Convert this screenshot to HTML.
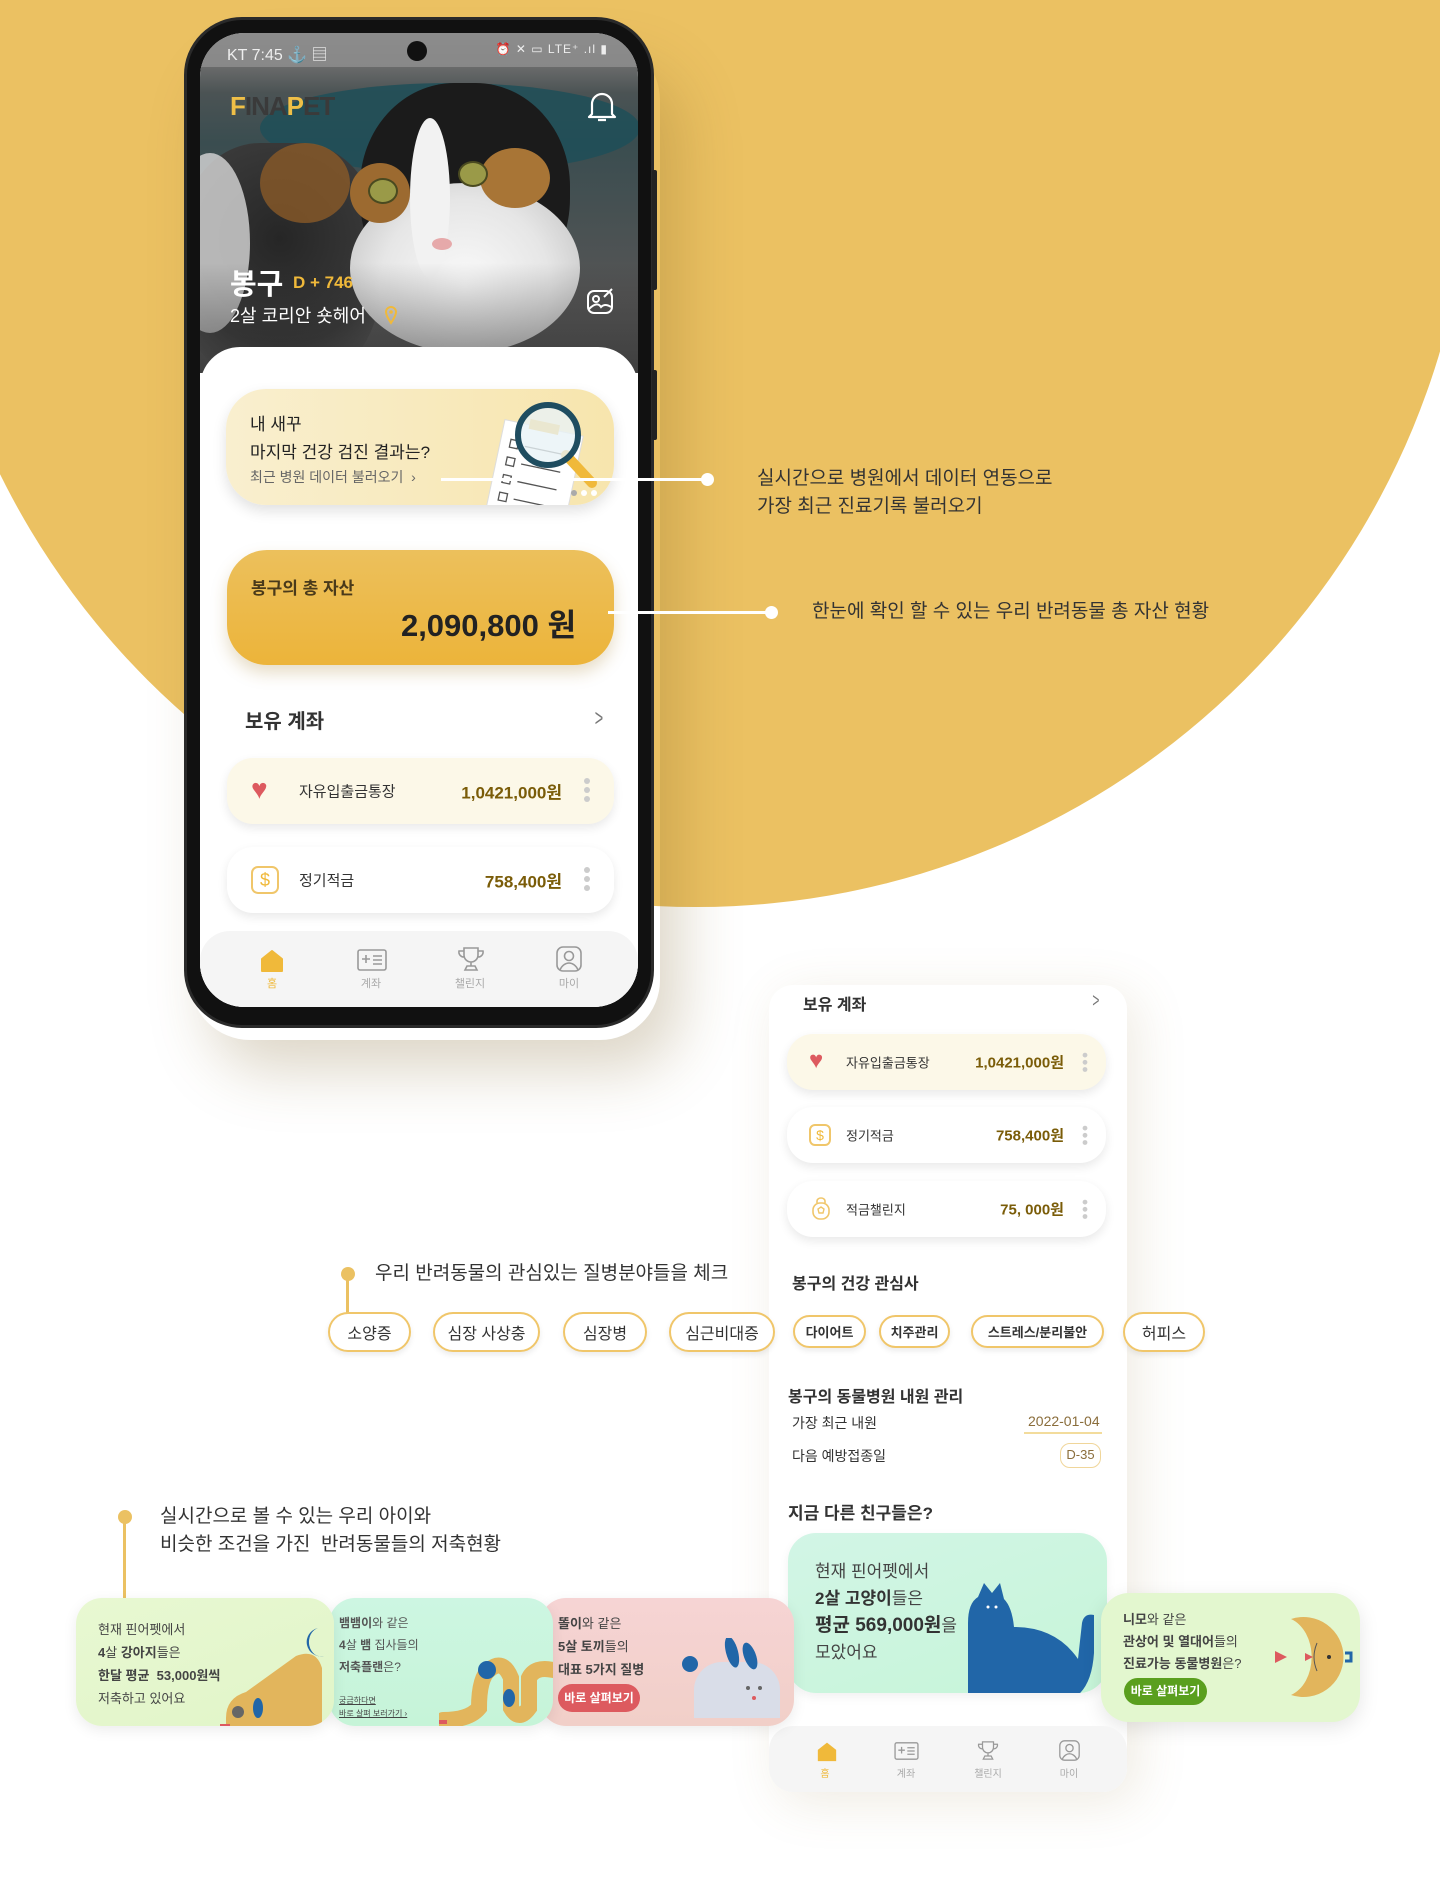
<!DOCTYPE html>
<html><head><meta charset="utf-8">
<style>
*{margin:0;padding:0;box-sizing:border-box}
body{width:1440px;height:1896px;position:relative;overflow:hidden;background:#fff;font-family:"Liberation Sans","Noto Sans CJK KR",sans-serif;color:#333}
.a{position:absolute}
.circle{position:absolute;left:-80px;top:-645px;width:1552px;height:1552px;border-radius:50%;background:#ebc162}
.ann{font-size:19px;color:#333;line-height:28px;white-space:nowrap}
.line{position:absolute;height:3px;background:#fff}
.wdot{position:absolute;width:13px;height:13px;border-radius:50%;background:#fff}
.ydot{position:absolute;width:14px;height:14px;border-radius:50%;background:#ebc162}
.row{position:absolute;border-radius:26px;background:#fff;box-shadow:0 4px 10px rgba(0,0,0,.09);font-size:15px;color:#333}
.row .n{position:absolute;top:50%;transform:translateY(-50%)}
.amt{color:#7a5c08;font-weight:bold}
.dots{position:absolute;width:6px}
.dots i{display:block;width:6px;height:6px;border-radius:50%;background:#ccc;margin-bottom:3px}
.chip{position:absolute;border:2px solid #f0c66a;border-radius:22px;background:#fff;display:flex;align-items:center;justify-content:center;font-size:16px;color:#333;box-shadow:0 3px 6px rgba(0,0,0,.08)}
.nav{position:absolute;background:#f5f5f5}
.nl{position:absolute;font-size:11px;color:#aaa;transform:translateX(-50%);text-align:center}
</style></head><body>
<div class="circle"></div>

<div class="a" style="left:190px;top:40px;width:470px;height:1000px;border-radius:60px;box-shadow:20px 30px 60px rgba(120,90,30,.25)"></div>
<div class="a" style="left:184px;top:17px;width:470px;height:1011px;border-radius:58px;background:#111;border:3px solid #2a2a2a"></div>
<div class="a" style="left:652px;top:170px;width:5px;height:120px;background:#222;border-radius:2px"></div>
<div class="a" style="left:652px;top:370px;width:5px;height:70px;background:#222;border-radius:2px"></div>
<div class="a" style="left:200px;top:33px;width:438px;height:974px;border-radius:44px;overflow:hidden;background:#fff">
  <div class="a" style="left:0;top:0;width:438px;height:340px;background:linear-gradient(180deg,#8c8c8c 0,#6e6e6e 30px,#4b5354 60px,#3a4d50 110px,#555 260px,#5a5a5a 340px)"></div>
  <div class="a" style="left:60px;top:50px;width:380px;height:90px;border-radius:50%;background:#1f4f58;opacity:.85"></div>
  <div class="a" style="left:-20px;top:110px;width:200px;height:240px;border-radius:40%;background:radial-gradient(circle at 50% 40%,#262626,#3a3a3a 60%,#555 80%)"></div>
  <div class="a" style="left:60px;top:110px;width:90px;height:80px;border-radius:50%;background:#8a5a28;opacity:.8"></div>
  <div class="a" style="left:-30px;top:120px;width:80px;height:180px;border-radius:50%;background:#d8d8d8;opacity:.8"></div>
  <div class="a" style="left:160px;top:50px;width:210px;height:230px;border-radius:45% 45% 50% 50%;background:#1b1b1b"></div>
  <div class="a" style="left:150px;top:150px;width:230px;height:170px;border-radius:50%;background:radial-gradient(circle at 50% 60%,#fafafa,#e6e6e6 55%,#cfcfcf 80%)"></div>
  <div class="a" style="left:210px;top:85px;width:40px;height:160px;border-radius:50%;background:#f2f2f2"></div>
  <div class="a" style="left:150px;top:130px;width:60px;height:60px;border-radius:50%;background:#9c6a30"></div>
  <div class="a" style="left:280px;top:115px;width:70px;height:60px;border-radius:50%;background:#a87536"></div>
  <div class="a" style="left:168px;top:145px;width:30px;height:26px;border-radius:50%;background:#9a9a48;border:2px solid #4a4a20"></div>
  <div class="a" style="left:258px;top:128px;width:30px;height:26px;border-radius:50%;background:#9a9a48;border:2px solid #4a4a20"></div>
  <div class="a" style="left:232px;top:205px;width:20px;height:12px;border-radius:50%;background:#e6a9aa"></div>
  <div class="a" style="left:0;top:230px;width:438px;height:110px;background:linear-gradient(180deg,rgba(40,40,40,0),rgba(40,40,40,.55))"></div>
  <div class="a" style="left:0;top:0;width:438px;height:34px;background:rgba(140,140,140,.9)"></div>
  <div class="a" style="left:27px;top:8px;font-size:16px;color:#eee">KT 7:45 ⚓ ▤</div>
  <div class="a" style="left:207px;top:8px;width:20px;height:20px;border-radius:50%;background:#111"></div>
  <div class="a" style="right:30px;top:9px;font-size:12px;color:#eee;letter-spacing:1px">⏰ ✕ ▭ LTE⁺ .ıl ▮</div>
  <div class="a" style="left:30px;top:58px;font-size:26px;font-weight:bold;letter-spacing:-1px;color:#3a3a3a"><span style="color:#efbf47">F</span>INA<span style="color:#efbf47">P</span>ET</div>
  <svg class="a" style="left:386px;top:56px" width="32" height="34" viewBox="0 0 32 34"><path d="M6 25 V15 a10 10 0 0 1 20 0 V25 L29 28 H3 Z M12 31 h8" fill="none" stroke="#fff" stroke-width="2.2" stroke-linejoin="round"/></svg>
  <div class="a" style="left:30px;top:228px;font-size:29px;font-weight:bold;color:#fff">봉구</div>
  <div class="a" style="left:93px;top:240px;font-size:17px;font-weight:bold;color:#f0b93a">D + 746</div>
  <div class="a" style="left:30px;top:269px;font-size:18px;color:#fff">2살 코리안 숏헤어</div>
  <svg class="a" style="left:184px;top:272px" width="14" height="20" viewBox="0 0 14 20"><path d="M7 18 C3 12 2 9 2 7 a5 5 0 0 1 10 0 c0 2 -1 5 -5 11z" fill="none" stroke="#f0b93a" stroke-width="2"/><circle cx="7" cy="7" r="1.8" fill="#f0b93a"/></svg>
  <svg class="a" style="left:386px;top:254px" width="30" height="30" viewBox="0 0 30 30"><rect x="2" y="4" width="24" height="22" rx="6" fill="none" stroke="#fff" stroke-width="2"/><circle cx="10" cy="12" r="3" fill="none" stroke="#fff" stroke-width="2"/><path d="M3 22 q8 -8 12 -2 q4 -4 10 0 M18 10 l8 -8" fill="none" stroke="#fff" stroke-width="2"/></svg>
  <div class="a" style="left:0;top:314px;width:438px;height:700px;background:#fff;border-radius:40px 40px 0 0"></div>
  <div class="a" style="left:26px;top:356px;width:388px;height:116px;border-radius:40px;background:linear-gradient(90deg,#f9efcf,#f7e5ad);box-shadow:0 6px 14px rgba(0,0,0,.12);overflow:hidden">
    <div class="a" style="left:24px;top:22px;font-size:17px;color:#222;line-height:28px">내 새꾸<br>마지막 건강 검진 결과는?</div>
    <div class="a" style="left:24px;top:78px;font-size:14px;color:#666">최근 병원 데이터 불러오기 &nbsp;›</div>
    <svg class="a" style="left:240px;top:6px" width="150" height="115" viewBox="0 0 150 115">
      <g transform="rotate(12 60 70)"><rect x="30" y="30" width="80" height="100" fill="#fff" stroke="#ddd"/><rect x="55" y="24" width="30" height="10" fill="#f0b93a"/>
      <path d="M40 48h8v8h-8z M40 66h8v8h-8z M40 84h8v8h-8z M40 102h8v8h-8z M55 52h40 M55 70h40 M55 88h40 M55 106h40" stroke="#555" fill="none" stroke-width="1.3"/></g>
      <line x1="100" y1="60" x2="126" y2="88" stroke="#f0b93a" stroke-width="10" stroke-linecap="round"/>
      <circle cx="82" cy="40" r="30" fill="#e9f3f6" fill-opacity=".8" stroke="#1f4d60" stroke-width="6"/>
      <circle cx="108" cy="98" r="3" fill="#aaa"/><circle cx="118" cy="98" r="3" fill="#fff"/><circle cx="128" cy="98" r="3" fill="#fff"/>
    </svg>
  </div>
  <div class="a" style="left:27px;top:517px;width:387px;height:115px;border-radius:40px;background:linear-gradient(180deg,#ecc05c,#ecb43a);box-shadow:0 8px 16px rgba(160,120,30,.25)">
    <div class="a" style="left:24px;top:24px;font-size:17px;font-weight:bold;color:#4a3a1a">봉구의 총 자산</div>
    <div class="a" style="right:38px;top:50px;font-size:31px;font-weight:bold;color:#222">2,090,800 원</div>
  </div>
  <div class="a" style="left:45px;top:672px;font-size:20px;font-weight:bold;color:#333">보유 계좌</div>
  <div class="a" style="left:392px;top:672px;font-size:24px;color:#777;transform:scaleX(.6)">&gt;</div>
  <div class="row" style="left:27px;top:725px;width:387px;height:66px;background:#fcf8e8">
    <div class="n" style="left:24px;font-size:28px;color:#dd5a5f;transform:translateY(-54%)">♥</div>
    <div class="n" style="left:72px">자유입출금통장</div>
    <div class="n amt" style="right:52px;font-size:17px">1,0421,000원</div>
    <div class="dots" style="right:24px;top:20px"><i></i><i></i><i></i></div>
  </div>
  <div class="row" style="left:27px;top:814px;width:387px;height:66px">
    <div class="n" style="left:24px;width:28px;height:28px;border:2px solid #f0c66a;border-radius:7px;color:#f0b93a;font-size:18px;text-align:center;line-height:24px">$</div>
    <div class="n" style="left:72px">정기적금</div>
    <div class="n amt" style="right:52px;font-size:17px">758,400원</div>
    <div class="dots" style="right:24px;top:20px"><i></i><i></i><i></i></div>
  </div>
  <div class="nav" style="left:0;top:898px;width:438px;height:80px;border-radius:30px 30px 0 0">
    <svg class="a" style="left:59px;top:18px" width="26" height="24" viewBox="0 0 26 24"><path d="M3 10 L13 2 L23 10 V22 H3Z" fill="#f0b93a" stroke="#f0b93a" stroke-width="2" stroke-linejoin="round"/></svg>
    <div class="nl" style="left:72px;top:44px;color:#f0b93a">홈</div>
    <svg class="a" style="left:157px;top:18px" width="30" height="22" viewBox="0 0 30 22"><rect x="1" y="1" width="28" height="20" rx="2" fill="none" stroke="#999" stroke-width="1.6"/><path d="M5 10h8M9 6v8M16 7h9M16 11h9M16 15h9" stroke="#999" stroke-width="1.6"/></svg>
    <div class="nl" style="left:171px;top:44px">계좌</div>
    <svg class="a" style="left:257px;top:15px" width="28" height="26" viewBox="0 0 28 26"><path d="M7 2h14v7a7 7 0 0 1 -14 0z M7 5H2a5 5 0 0 0 5 6 M21 5h5a5 5 0 0 1 -5 6 M14 16v4 M8 24h12l-2 -4h-8z" fill="none" stroke="#999" stroke-width="1.6"/></svg>
    <div class="nl" style="left:270px;top:44px">챌린지</div>
    <svg class="a" style="left:356px;top:15px" width="26" height="26" viewBox="0 0 26 26"><rect x="1" y="1" width="24" height="24" rx="6" fill="none" stroke="#999" stroke-width="1.6"/><circle cx="13" cy="10" r="4.5" fill="none" stroke="#999" stroke-width="1.6"/><path d="M4 24c2-5 6-7 9-7s7 2 9 7" fill="none" stroke="#999" stroke-width="1.6"/></svg>
    <div class="nl" style="left:369px;top:44px">마이</div>
  </div>
</div>

<div class="line" style="left:441px;top:478px;width:266px"></div>
<div class="wdot" style="left:701px;top:473px"></div>
<div class="a ann" style="left:757px;top:465px">실시간으로 병원에서 데이터 연동으로<br>가장 최근 진료기록 불러오기</div>
<div class="line" style="left:608px;top:611px;width:163px"></div>
<div class="wdot" style="left:765px;top:606px"></div>
<div class="a ann" style="left:812px;top:598px">한눈에 확인 할 수 있는 우리 반려동물 총 자산 현황</div>

<div class="a" style="left:769px;top:985px;width:358px;height:807px;border-radius:24px;background:#fff;box-shadow:10px 10px 50px rgba(150,120,60,.15)"></div>
<div class="a" style="left:803px;top:991px;font-size:16px;font-weight:bold">보유 계좌</div>
<div class="a" style="left:1090px;top:990px;font-size:20px;color:#777;transform:scaleX(.6)">&gt;</div>
<div class="row" style="left:787px;top:1034px;width:319px;height:56px;background:#fcf8e8;font-size:13px">
  <div class="n" style="left:22px;font-size:24px;color:#dd5a5f;transform:translateY(-54%)">♥</div>
  <div class="n" style="left:59px">자유입출금통장</div>
  <div class="n amt" style="right:42px;font-size:15px">1,0421,000원</div>
  <div class="dots" style="right:18px;top:16px;transform:scale(.8)"><i></i><i></i><i></i></div>
</div>
<div class="row" style="left:787px;top:1107px;width:319px;height:56px;font-size:13px">
  <div class="n" style="left:22px;width:22px;height:22px;border:2px solid #f0c66a;border-radius:6px;color:#f0b93a;font-size:14px;text-align:center;line-height:18px">$</div>
  <div class="n" style="left:59px">정기적금</div>
  <div class="n amt" style="right:42px;font-size:15px">758,400원</div>
  <div class="dots" style="right:18px;top:16px;transform:scale(.8)"><i></i><i></i><i></i></div>
</div>
<div class="row" style="left:787px;top:1181px;width:319px;height:56px;font-size:13px">
  <svg class="n" style="left:24px" width="20" height="24" viewBox="0 0 20 24"><path d="M6 6V4a4 3 0 0 1 8 0v2" fill="none" stroke="#f0c66a" stroke-width="1.6"/><rect x="2" y="6" width="16" height="16" rx="7" fill="none" stroke="#f0c66a" stroke-width="1.6"/><path d="M10 10l3 2-1 4h-4l-1-4z" fill="none" stroke="#f0c66a" stroke-width="1.4"/></svg>
  <div class="n" style="left:59px">적금챌린지</div>
  <div class="n amt" style="right:42px;font-size:15px">75, 000원</div>
  <div class="dots" style="right:18px;top:16px;transform:scale(.8)"><i></i><i></i><i></i></div>
</div>
<div class="a" style="left:792px;top:1270px;font-size:16px;font-weight:bold">봉구의 건강 관심사</div>

<div class="ydot" style="left:341px;top:1267px"></div>
<div class="a" style="left:346px;top:1274px;width:3px;height:40px;background:#ebc162"></div>
<div class="a ann" style="left:375px;top:1260px">우리 반려동물의 관심있는 질병분야들을 체크</div>

<div class="chip" style="left:328px;top:1312px;width:83px;height:40px">소양증</div>
<div class="chip" style="left:433px;top:1312px;width:107px;height:40px">심장 사상충</div>
<div class="chip" style="left:563px;top:1312px;width:84px;height:40px">심장병</div>
<div class="chip" style="left:669px;top:1312px;width:106px;height:40px">심근비대증</div>
<div class="chip" style="left:793px;top:1315px;width:73px;height:33px;font-size:13px;font-weight:bold">다이어트</div>
<div class="chip" style="left:879px;top:1315px;width:71px;height:33px;font-size:13px;font-weight:bold">치주관리</div>
<div class="chip" style="left:971px;top:1315px;width:133px;height:33px;font-size:13px;font-weight:bold">스트레스/분리불안</div>
<div class="chip" style="left:1123px;top:1312px;width:82px;height:40px">허피스</div>

<div class="a" style="left:788px;top:1383px;font-size:16px;font-weight:bold">봉구의 동물병원 내원 관리</div>
<div class="a" style="left:792px;top:1413px;font-size:14px">가장 최근 내원</div>
<div class="a" style="left:1024px;top:1413px;font-size:14px;color:#8a6d3b;border-bottom:2px solid #f3dc9c;padding:0 2px 3px 4px">2022-01-04</div>
<div class="a" style="left:792px;top:1446px;font-size:14px">다음 예방접종일</div>
<div class="a" style="left:1060px;top:1443px;width:41px;height:25px;border:1.5px solid #f0d69a;border-radius:10px;font-size:13px;color:#8a6d3b;text-align:center;line-height:22px">D-35</div>
<div class="a" style="left:788px;top:1499px;font-size:17px;font-weight:bold">지금 다른 친구들은?</div>

<div class="a" style="left:788px;top:1533px;width:319px;height:160px;border-radius:28px;background:linear-gradient(160deg,#d2f5e6,#c6f5d8);overflow:hidden;box-shadow:0 4px 10px rgba(0,0,0,.06)">
  <div class="a" style="left:27px;top:25px;font-size:17px;line-height:27px;color:#444">현재 핀어펫에서<br><b style="color:#333">2살 고양이</b>들은<br><b style="color:#333;font-size:19px">평균 569,000원</b>을<br>모았어요</div>
  <svg class="a" style="left:178px;top:50px" width="140" height="112" viewBox="0 0 140 112"><path d="M2 110 V40 Q2 20 12 14 L18 0 L26 10 L34 0 L38 16 Q46 24 48 44 Q90 44 112 76 L116 40 Q118 30 128 32 L128 70 Q126 100 112 112 H20 Q2 112 2 110Z" fill="#2166a8"/><circle cx="22" cy="24" r="1.5" fill="#fff"/><circle cx="30" cy="24" r="1.5" fill="#fff"/></svg>
</div>
<div class="a" style="left:1101px;top:1593px;width:259px;height:129px;border-radius:28px;background:#e3f7cf;box-shadow:0 6px 20px rgba(0,0,0,.1);overflow:hidden">
  <div class="a" style="left:22px;top:16px;font-size:13px;line-height:22px;color:#444"><b>니모</b>와 같은<br><b>관상어 및 열대어</b>들의<br><b>진료가능 동물병원</b>은?</div>
  <div class="a" style="left:23px;top:85px;width:83px;height:27px;border-radius:14px;background:#5a9f1e;color:#fff;font-size:12px;font-weight:bold;text-align:center;line-height:27px">바로 살펴보기</div>
  <svg class="a" style="left:170px;top:20px" width="84" height="88" viewBox="0 0 84 88"><path d="M20 6 A40 40 0 1 1 20 82 A30 40 0 0 0 20 6Z" fill="#e2b55c"/><path d="M4 38 L16 44 L4 50Z" fill="#dd5a5f"/><path d="M34 40 L42 44 L34 48Z" fill="#dd5a5f"/><path d="M46 30 Q40 44 46 58" fill="none" stroke="#555" stroke-width="1"/><circle cx="58" cy="44" r="2" fill="#333"/><path d="M74 40h6v8h-6" fill="none" stroke="#2166a8" stroke-width="3"/></svg>
</div>
<div class="nav" style="left:769px;top:1726px;width:358px;height:66px;border-radius:24px;background:#f5f5f5">
  <svg class="a" style="left:47px;top:16px" width="22" height="20" viewBox="0 0 26 24"><path d="M3 10 L13 2 L23 10 V22 H3Z" fill="#f0b93a" stroke="#f0b93a" stroke-width="2"/></svg>
  <div class="nl" style="left:56px;top:39px;color:#f0b93a;font-size:10px">홈</div>
  <svg class="a" style="left:125px;top:16px" width="25" height="18" viewBox="0 0 30 22"><rect x="1" y="1" width="28" height="20" rx="2" fill="none" stroke="#999" stroke-width="1.6"/><path d="M5 10h8M9 6v8M16 7h9M16 11h9M16 15h9" stroke="#999" stroke-width="1.6"/></svg>
  <div class="nl" style="left:137px;top:39px;font-size:10px">계좌</div>
  <svg class="a" style="left:208px;top:14px" width="22" height="21" viewBox="0 0 28 26"><path d="M7 2h14v7a7 7 0 0 1 -14 0z M7 5H2a5 5 0 0 0 5 6 M21 5h5a5 5 0 0 1 -5 6 M14 16v4 M8 24h12l-2 -4h-8z" fill="none" stroke="#999" stroke-width="1.6"/></svg>
  <div class="nl" style="left:219px;top:39px;font-size:10px">챌린지</div>
  <svg class="a" style="left:290px;top:14px" width="21" height="21" viewBox="0 0 26 26"><rect x="1" y="1" width="24" height="24" rx="6" fill="none" stroke="#999" stroke-width="1.6"/><circle cx="13" cy="10" r="4.5" fill="none" stroke="#999" stroke-width="1.6"/><path d="M4 24c2-5 6-7 9-7s7 2 9 7" fill="none" stroke="#999" stroke-width="1.6"/></svg>
  <div class="nl" style="left:300px;top:39px;font-size:10px">마이</div>
</div>

<div class="ydot" style="left:118px;top:1510px"></div>
<div class="a" style="left:123px;top:1520px;width:3px;height:80px;background:#ebc162"></div>
<div class="a ann" style="left:160px;top:1503px">실시간으로 볼 수 있는 우리 아이와<br>비슷한 조건을 가진&nbsp; 반려동물들의 저축현황</div>

<div class="a" style="left:540px;top:1598px;width:254px;height:128px;border-radius:26px;background:linear-gradient(180deg,#f6d4d4,#f1cfc8);overflow:hidden;box-shadow:0 4px 14px rgba(0,0,0,.08)">
  <div class="a" style="left:18px;top:14px;font-size:13px;line-height:23px;color:#444"><b>똘이</b>와 같은<br><b>5살 토끼</b>들의<br><b>대표 5가지 질병</b></div>
  <div class="a" style="left:18px;top:86px;width:82px;height:28px;border-radius:14px;background:#dd5a5f;color:#fff;font-size:12px;font-weight:bold;text-align:center;line-height:28px">바로 살펴보기</div>
  <svg class="a" style="left:140px;top:40px" width="100" height="80" viewBox="0 0 100 80"><rect x="14" y="24" width="86" height="56" rx="28" fill="#d9dde8"/><rect x="14" y="52" width="86" height="28" fill="#d9dde8"/><circle cx="10" cy="26" r="8" fill="#2166a8"/><ellipse cx="52" cy="14" rx="6" ry="16" fill="#2166a8" transform="rotate(-15 52 14)"/><ellipse cx="70" cy="18" rx="6" ry="14" fill="#2166a8" transform="rotate(-20 70 18)"/><circle cx="68" cy="50" r="2" fill="#666"/><circle cx="80" cy="50" r="2" fill="#666"/><circle cx="74" cy="60" r="2" fill="#dd5a5f"/></svg>
</div>
<div class="a" style="left:329px;top:1598px;width:224px;height:128px;border-radius:26px;background:linear-gradient(180deg,#cdf6e2,#c6f4d8);overflow:hidden;box-shadow:0 4px 14px rgba(0,0,0,.08)">
  <div class="a" style="left:10px;top:14px;font-size:12px;line-height:22px;color:#555"><b>뱀뱀이</b>와 같은<br><b>4</b>살 <b>뱀</b> 집사들의<br><b>저축플랜</b>은?</div>
  <div class="a" style="left:10px;top:96px;font-size:8px;color:#444;line-height:13px;text-decoration:underline">궁금하다면<br>바로 살펴 보러가기 ›</div>
  <svg class="a" style="left:110px;top:50px" width="114" height="80" viewBox="0 0 114 80"><path d="M4 72 Q30 72 40 60 Q40 30 50 22 Q64 10 72 30 L72 60 Q80 74 90 60 L90 30 Q96 18 114 22" fill="none" stroke="#e2b55c" stroke-width="16" stroke-linecap="round"/><circle cx="48" cy="22" r="9" fill="#2166a8"/><ellipse cx="70" cy="50" rx="6" ry="9" fill="#2166a8"/><path d="M0 74 h8" stroke="#dd5a5f" stroke-width="4"/></svg>
</div>
<div class="a" style="left:76px;top:1598px;width:258px;height:128px;border-radius:26px;background:linear-gradient(160deg,#e8f8d2,#e1f5c8);overflow:hidden;box-shadow:0 4px 14px rgba(0,0,0,.08)">
  <div class="a" style="left:22px;top:20px;font-size:13px;line-height:23px;color:#444">현재 핀어펫에서<br><b>4</b>살 <b>강아지</b>들은<br><b>한달 평균&nbsp; 53,000원씩</b><br>저축하고 있어요</div>
  <svg class="a" style="left:130px;top:30px" width="130" height="100" viewBox="0 0 130 100"><path d="M112 0 a13 13 0 1 0 6 28 a10 12 0 0 1 -6 -28z" fill="#2166a8"/><path d="M20 100 L20 90 Q20 70 40 64 L90 28 Q110 20 116 40 L116 100Z" fill="#e2b55c"/><circle cx="32" cy="84" r="6" fill="#666"/><ellipse cx="52" cy="80" rx="5" ry="10" fill="#2166a8"/><path d="M14 98 h10" stroke="#dd5a5f" stroke-width="4"/></svg>
</div>
</body></html>
